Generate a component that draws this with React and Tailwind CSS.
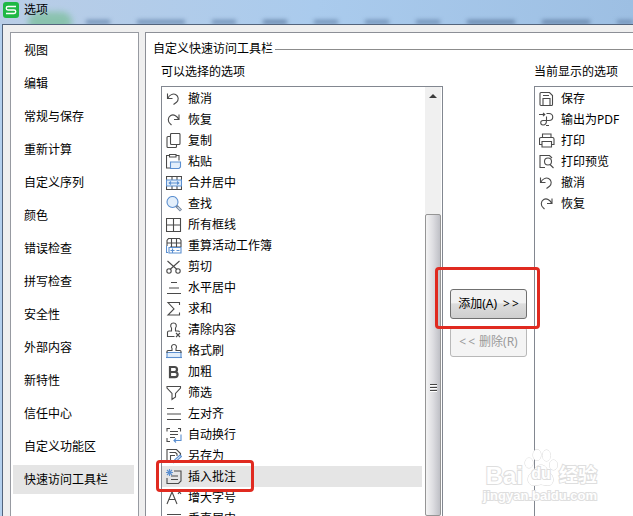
import { useState } from "react";
import clsx from "clsx";

const INK = "#4a4a4a";
const BLUE = "#5b8fd0";
const PALE = "#e3effb";

const icons = {
  undo: (
    <path d="M1.500 2.500v5h5M1.800 7.200C3.500 4 7 2.100 9.600 3.500c3.400 1.800 3.200 5.600.9 7.800L7.500 13.500" />
  ),
  redo: (
    <path d="M13 2.500v5H8M12.700 7.200C11 3.700 7.500 1.800 4.700 3.500c-3.200 2-3 6-.6 8.200L5.500 13" />
  ),
  copy: (
    <>
      <rect x="4.500" y=".5" width="9.500" height="11" rx="1" />
      <path d="M4.500 3.500H2a1 1 0 0 0-1 1v9a1 1 0 0 0 1 1h7.500a1 1 0 0 0 1-1v-2" />
    </>
  ),
  paste: (
    <>
      <path d="M3.500 1.500H.5v12.500H4M10 1.500h3v5M3.500.5h6.500v2.500H3.500z" />
      <path d="M4.500 8h10v5l-1.500 1.500H4.500z" stroke={BLUE} fill={PALE} />
    </>
  ),
  merge: (
    <>
      <path d="M.5 5V1.500h15V5M.5 11v3.500h15V11M6 1.500V5M11 1.500V5M6 11v3.500M11 11v3.500" />
      <path d="M.5 5h15v6H.5z" stroke={BLUE} fill={PALE} />
      <path d="M3 8h10M5 6.500 3.200 8 5 9.500M11 6.500 12.800 8 11 9.500" stroke={BLUE} />
    </>
  ),
  find: (
    <>
      <circle cx="6.500" cy="6" r="5.500" stroke={BLUE} fill={PALE} />
      <path d="m10.500 10 4.500 4.500" stroke="#6d7f96" strokeWidth="3" />
      <path d="m11.500 11 3 3" stroke="#cdd9e8" />
    </>
  ),
  borders: <path d="M.5 1.500h14v13H.5zM7.500 1.500v13M.5 8h14" />,
  recalc: (
    <>
      <path d="M1 8V2.500L2.500.5h11l1.500 2V9M1 5h14M5.500.5V9M10.500.5V9M4 9h11" />
      <path d="M.5 7.500v7h1.500M3 9.500h12v5.500H3zM4.500 12.500h4M6.500 10.500v4M10.500 12.500h3" stroke={BLUE} />
    </>
  ),
  cut: (
    <>
      <path d="M1.500 2 11 10.500M13.500 2 4 10.500" />
      <circle cx="3" cy="12" r="2.200" />
      <circle cx="12" cy="12" r="2.200" />
    </>
  ),
  center: <path d="M5 2.500h6M3 8h10M1 13.500h14" />,
  sum: <path d="M13.500 4V1.500H2l6 6.500-6 6h11.500V11.500" />,
  clear: (
    <>
      <path d="M8.500 14.500H1.500v-4a1.500 1.500 0 0 1 1.500-1.500h2.500V6C4 4 4.500 1 7.500 1S11 4 9.500 6v3H12a1.500 1.500 0 0 1 1.500 1" />
      <path d="m10 11 4 4M14 11l-4 4" />
    </>
  ),
  brush: (
    <>
      <path d="M1 9.500h14v5H1z" fill={PALE} stroke={BLUE} />
      <path d="M1 10V8.500a1 1 0 0 1 1-1h4v-2C5 4 5.500 1.500 8 1.500S11 4 10 5.500v2h4a1 1 0 0 1 1 1V10" />
      <path d="M0 14.500h16" stroke={BLUE} />
    </>
  ),
  bold: (
    <path
      d="M4 3h4.500a2.400 2.400 0 0 1 0 5H4zM4 8h5a2.600 2.600 0 0 1 0 5.200H4z"
      strokeWidth="2.200"
    />
  ),
  filter: <path d="M1 1.500h13.500v1.500L9.500 8.500V12L6 14.500V8.500L1 3z" />,
  left: <path d="M1 2.500h7M1 8h14M1 13.500h14" />,
  wrap: (
    <>
      <path d="M4 1.500H1v3M12 1.500h2.500v3M1 11v3.500h3M4 4.500h8M4 7.500h8M4 10.500h5" />
      <path d="M15 7.500v6H8M10 11.500l-2 2 2 2" stroke={BLUE} />
    </>
  ),
  saveAs: (
    <>
      <path d="M5 14.500H1v-13h9.500l4 4v2M3.500 4.500H9.500l1.500 1.500V8M4.500 14V7.500H9" />
      <path d="m8 14.500.5-2.500 5.500-5 1.500 1.500-5.500 5z" stroke={BLUE} fill={PALE} />
    </>
  ),
  comment: (
    <>
      <path d="M8 2h7v10l-2.500 2.500H1V9M5 7h7M5 10.500h7" />
      <path d="M3.500 0v7M0 3.500h7M1 1l5 5M6 1 1 6" stroke={BLUE} />
    </>
  ),
  grow: <path d="m1 14 5-12 5 12M2.800 9.500h6.400M12 4l1.500-2L15 4" />,
  middle: <path d="M1 3.500h14M4 7.500h8M1 11.500h14" />,
  save: (
    <>
      <path d="M2 1.500h8.500l3 3v9a1 1 0 0 1-1 1H2a1 1 0 0 1-1-1v-11a1 1 0 0 1 1-1z" />
      <path d="M4 14.500v-7h7v7M4 4.500h6" />
    </>
  ),
  pdf: (
    <path d="M0 2.500h5.500M4 .8l1.800 1.700L4 4.200M7.500 1.500h2.500c5 0 5 7 0 7H4c-3 0-3 4.500 0 4.500s3.500-2 3.500-4.500V4.500M7 13.500h3" />
  ),
  print: (
    <>
      <path d="M3.500 4.500V1h8.500v3.500M3 11.500H.5V6A1.500 1.500 0 0 1 2 4.500h11.500A1.500 1.500 0 0 1 15 6v5.500h-2.500" />
      <path d="M3 8.500h9.500v5.500H3z" />
    </>
  ),
  preview: (
    <>
      <path d="M6 13.500H1v-12h9.500l2.500 2.500" />
      <circle cx="9" cy="7.500" r="3.500" />
      <path d="m11 10.500 3.500 3.500" />
    </>
  ),
};

const Icon = ({ name }) => (
  <svg
    className="size-4 shrink-0"
    viewBox="0 0 16 16"
    fill="none"
    stroke={INK}
    strokeWidth="1.1"
    aria-hidden="true"
  >
    {icons[name]}
  </svg>
);

const categories = [
  "视图",
  "编辑",
  "常规与保存",
  "重新计算",
  "自定义序列",
  "颜色",
  "错误检查",
  "拼写检查",
  "安全性",
  "外部内容",
  "新特性",
  "信任中心",
  "自定义功能区",
  "快速访问工具栏",
];

const available = [
  { icon: "undo", label: "撤消" },
  { icon: "redo", label: "恢复" },
  { icon: "copy", label: "复制" },
  { icon: "paste", label: "粘贴" },
  { icon: "merge", label: "合并居中" },
  { icon: "find", label: "查找" },
  { icon: "borders", label: "所有框线" },
  { icon: "recalc", label: "重算活动工作簿" },
  { icon: "cut", label: "剪切" },
  { icon: "center", label: "水平居中" },
  { icon: "sum", label: "求和" },
  { icon: "clear", label: "清除内容" },
  { icon: "brush", label: "格式刷" },
  { icon: "bold", label: "加粗" },
  { icon: "filter", label: "筛选" },
  { icon: "left", label: "左对齐" },
  { icon: "wrap", label: "自动换行" },
  { icon: "saveAs", label: "另存为" },
  { icon: "comment", label: "插入批注", marked: true },
  { icon: "grow", label: "增大字号" },
  { icon: "middle", label: "垂直居中" },
];

const current = [
  { icon: "save", label: "保存" },
  { icon: "pdf", label: "输出为PDF" },
  { icon: "print", label: "打印" },
  { icon: "preview", label: "打印预览" },
  { icon: "undo", label: "撤消" },
  { icon: "redo", label: "恢复" },
];

const OptionRow = ({ item, selected, onSelect }) => (
  <li className="relative">
    <button
      className={clsx(
        "flex items-center gap-1.5 w-full h-[21px] px-1 text-left whitespace-nowrap",
        selected && "bg-[#e5e5e5]"
      )}
      onClick={onSelect}
    >
      <Icon name={item.icon} />
      {item.label}
    </button>
    {item.marked && (
      <span className="absolute z-10 -left-1.5 -top-1.5 w-[98px] h-8 rounded-sm border-3 border-[#e02a20] pointer-events-none" />
    )}
  </li>
);

const TitleBar = () => (
  <header className="relative flex items-center gap-[5px] h-6 pl-[3px] pb-1 overflow-hidden bg-linear-to-r from-[#b9cde6] via-[#aacbed] to-[#9dbfe3]">
    <div className="absolute inset-x-0 bottom-0 flex items-end justify-between h-2 pl-[86px] blur-[2px]" aria-hidden="true">
      <span className="w-6 h-1 bg-[#6f8eb3]" />
      <span className="w-12 h-1 bg-[#6f8eb3]" />
      <span className="w-6 h-1 bg-[#6f8eb3]" />
      <span className="w-6 h-1 bg-[#6583a8]" />
      <span className="w-6 h-1 bg-[#6f8eb3]" />
      <span className="w-6 h-1 bg-[#6f8eb3]" />
      <span className="w-6 h-1 bg-[#6f8eb3]" />
      <span className="w-12 h-1 bg-[#6583a8]" />
      <span className="w-12 h-1 bg-[#6583a8]" />
      <span className="w-4 h-1 bg-[#6f8eb3]" />
    </div>
    <div className="absolute left-7 -bottom-2 w-11 h-5 rounded-full bg-[#7fc0a0] opacity-80 blur-[3px]" />
    <svg className="relative size-4" viewBox="0 0 16 16" fill="none" aria-hidden="true">
      <rect width="16" height="16" rx="3" fill="#1fb845" />
      <path
        d="M13 4.500H5a1.700 1.700 0 0 0 0 3.500h6a1.700 1.700 0 0 1 0 3.500H3"
        stroke="#fff"
        strokeWidth="1.400"
      />
    </svg>
    <h1 className="relative text-black">选项</h1>
  </header>
);

const Scrollbar = () => (
  <div className="flex flex-col w-4 mr-px bg-[#f0f0f0]" aria-hidden="true">
    <div className="flex justify-center items-center h-[18px]">
      <svg className="w-2 h-1" viewBox="0 0 8 4">
        <path d="M4 0 8 4H0z" fill="#3c3c3c" />
      </svg>
    </div>
    <div className="mt-[109px] flex-1 flex flex-col items-center pt-[169px] rounded-xs border border-[#959595] bg-linear-to-r from-[#f4f4f4] via-[#dddde1] to-[#bfc0c6]">
      <svg className="w-[7px] h-2" viewBox="0 0 7 8">
        <path d="M0 .5h7M0 3.500h7M0 6.500h7" stroke="#444" />
        <path d="M0 1.500h7M0 4.500h7M0 7.500h7" stroke="#fff" />
      </svg>
    </div>
  </div>
);

const Watermark = () => (
  <div className="absolute right-9 bottom-3 flex flex-col items-end pointer-events-none font-['Liberation_Sans','Noto_Sans_CJK_SC',sans-serif] font-bold text-white [-webkit-text-stroke:2px_#dedede] [paint-order:stroke_fill]">
    <div className="flex items-end h-10 gap-px">
      <span className="text-[24px] leading-6">Bai</span>
      <span className="relative flex justify-center w-[34px] h-10">
        <svg className="absolute inset-0 w-[34px] h-10" viewBox="0 0 34 40" fill="#fff" stroke="#d8d8d8" aria-hidden="true">
          <ellipse cx="5" cy="15" rx="4" ry="5" />
          <ellipse cx="13" cy="7" rx="4" ry="5.500" />
          <ellipse cx="22.500" cy="7.500" rx="4" ry="5.500" />
          <ellipse cx="29.500" cy="17" rx="4" ry="5" />
          <path d="M17 17c5 0 6 5 9 8 4 3 5 12-2 12.500-3 0-5-1-7-1s-4 1-7 1C2 37 3 28 7 25c4-3 5-8 10-8z" />
        </svg>
        <span className="relative self-end pb-1 text-[16px] leading-5">du</span>
      </span>
      <span className="text-[19px] leading-6">经验</span>
    </div>
    <span className="text-[13px] leading-4">jingyan.baidu.com</span>
  </div>
);

const App = () => {
  const [category, setCategory] = useState("快速访问工具栏");
  const [selected, setSelected] = useState("插入批注");
  const [chosen, setChosen] = useState(null);

  return (
    <div className="relative flex flex-col h-screen overflow-hidden bg-[#b4d0ee] font-['Noto_Sans','Noto_Sans_CJK_SC',sans-serif] text-[12px] leading-4 text-black">
      <TitleBar />
      <div className="flex flex-1 gap-1.5 min-h-0 ml-0.5 pl-[7px] pt-[7px] border-l border-t border-[#53647c] bg-[#efefef]">
        <nav className="flex flex-col gap-1 shrink-0 w-[129px] pt-[3px] pl-0.5 pr-1 border-x border-t border-[#979aa1] bg-white">
          {categories.map((name) => (
            <button
              key={name}
              className={clsx(
                "shrink-0 h-[29px] px-[11px] text-left",
                name === category && "bg-[#e5e5e5]"
              )}
              onClick={() => setCategory(name)}
            >
              {name}
            </button>
          ))}
        </nav>

        <main className="flex flex-col flex-1 min-w-0 pt-2 pl-[7px] border-l border-t border-[#8c8f96] bg-white">
          <div className="flex items-center gap-0.5">
            <h2>自定义快速访问工具栏</h2>
            <div className="flex-1 h-px bg-[#8c8c8c]" />
          </div>

          <div className="flex flex-1 min-h-0 mt-[7px] pl-2">
            <section className="flex flex-col gap-1.5 shrink-0 w-[282px]">
              <h3>可以选择的选项</h3>
              <div className="flex flex-1 min-h-0 border-x border-t border-[#828790]">
                <ul className="flex-1 pt-px pr-[3px]">
                  {available.map((item) => (
                    <OptionRow
                      key={item.label}
                      item={item}
                      selected={item.label === selected}
                      onSelect={() => setSelected(item.label)}
                    />
                  ))}
                </ul>
                <Scrollbar />
              </div>
            </section>

            <div className="flex flex-col gap-2 shrink-0 w-[91px] px-[7px] pt-[225px]">
              <div className="relative">
                <button className="flex justify-center items-center gap-1.5 w-full h-[30px] rounded-[3px] border border-[#707070] bg-linear-to-b from-[#f2f2f2] from-45% via-[#dddddd] via-50% to-[#cfcfcf] whitespace-nowrap">
                  <span>添加(A)</span>
                  <span className="flex gap-0.5">
                    <span>&gt;</span>
                    <span>&gt;</span>
                  </span>
                </button>
                <span className="absolute z-10 -left-[15px] -top-[22px] w-[105px] h-[62px] rounded-sm border-3 border-[#e02a20] pointer-events-none" />
              </div>
              <button
                className="flex justify-center items-center gap-1 h-[30px] rounded-[3px] border border-[#b8b8b8] bg-[#f4f4f4] text-[#9a9a9a] whitespace-nowrap"
                disabled
              >
                <span className="flex gap-0.5">
                  <span>&lt;</span>
                  <span>&lt;</span>
                </span>
                <span>删除(R)</span>
              </button>
            </div>

            <section className="flex flex-col flex-1 gap-1.5 min-w-0">
              <h3>当前显示的选项</h3>
              <ul className="flex-1 pt-px border-l border-t border-[#828790]">
                {current.map((item) => (
                  <OptionRow
                    key={item.label}
                    item={item}
                    selected={item.label === chosen}
                    onSelect={() => setChosen(item.label)}
                  />
                ))}
              </ul>
            </section>
          </div>
        </main>
      </div>
      <Watermark />
    </div>
  );
};

export default App;
